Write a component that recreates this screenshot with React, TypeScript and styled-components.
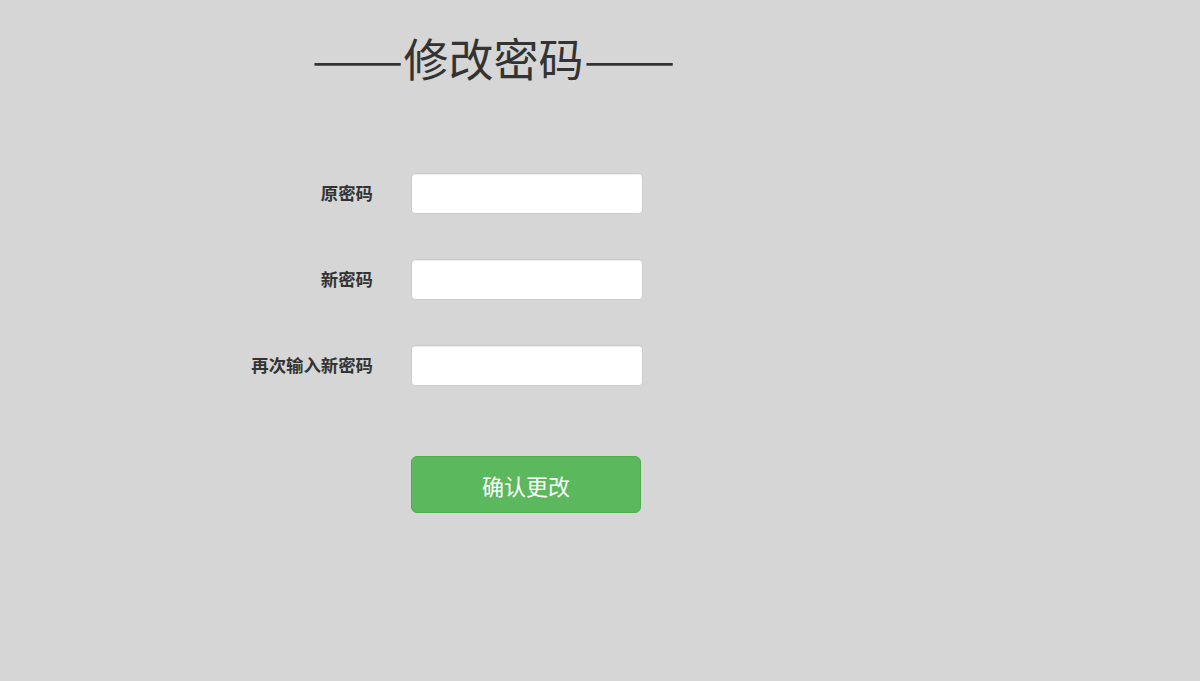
import styled, { createGlobalStyle } from 'styled-components';

const GlobalStyle = createGlobalStyle`
  html, body {
    margin: 0;
    padding: 0;
    background: #d6d6d6;
    font-family: "Helvetica Neue", "Liberation Sans", "Noto Sans CJK SC", sans-serif;
    color: #333;
  }
`;

const Page = styled.div`
  width: 1200px;
  height: 681px;
  background: #d6d6d6;
  overflow: hidden;
`;

const Header = styled.div`
  width: 987px;
  padding-top: 28px;
  text-align: center;
`;

const Title = styled.h2`
  margin: 0;
  font-family: "Noto Sans CJK SC", sans-serif;
  font-weight: 400;
  font-size: 45px;
  line-height: 60px;
  color: #333;
`;

const Dash = styled.span`
  display: inline-block;
  transform: scaleX(1.21);
  transform-origin: center;
  margin: 0 8px;
`;

const Form = styled.form`
  margin-top: 85px;
  display: flex;
  flex-direction: column;
  gap: 45px;
`;

const Row = styled.div`
  display: grid;
  grid-template-columns: 373px 232px;
  column-gap: 38px;
  align-items: center;
`;

const Label = styled.label`
  text-align: right;
  font-family: "Noto Sans CJK SC", sans-serif;
  font-weight: 700;
  font-size: 17.4px;
  line-height: 20px;
  margin-top: -2px;
  color: #333;
`;

const Input = styled.input`
  box-sizing: border-box;
  height: 41px;
  width: 232px;
  padding: 6px 12px;
  background: #fff;
  border: 1px solid #ccc;
  border-radius: 4px;
  box-shadow: inset 0 1px 1px rgba(0, 0, 0, 0.075);
  font-size: 14px;
  outline: none;
`;

const Actions = styled.div`
  margin-top: 70px;
  padding-left: 411px;
`;

const Button = styled.button`
  width: 230px;
  height: 57px;
  background: #5cb85c;
  border: 1px solid #4cae4c;
  border-radius: 6px;
  color: #fff;
  font-family: "Noto Sans CJK SC", sans-serif;
  font-size: 22px;
  cursor: pointer;
`;

const fields = ['原密码', '新密码', '再次输入新密码'];

export default function App() {
  return (
    <Page>
      <GlobalStyle />
      <Header>
        <Title>
          <Dash>——</Dash>修改密码<Dash>——</Dash>
        </Title>
      </Header>
      <Form onSubmit={(e) => e.preventDefault()}>
        {fields.map((f) => (
          <Row key={f}>
            <Label>{f}</Label>
            <Input type="password" />
          </Row>
        ))}
      </Form>
      <Actions>
        <Button type="submit">确认更改</Button>
      </Actions>
    </Page>
  );
}
